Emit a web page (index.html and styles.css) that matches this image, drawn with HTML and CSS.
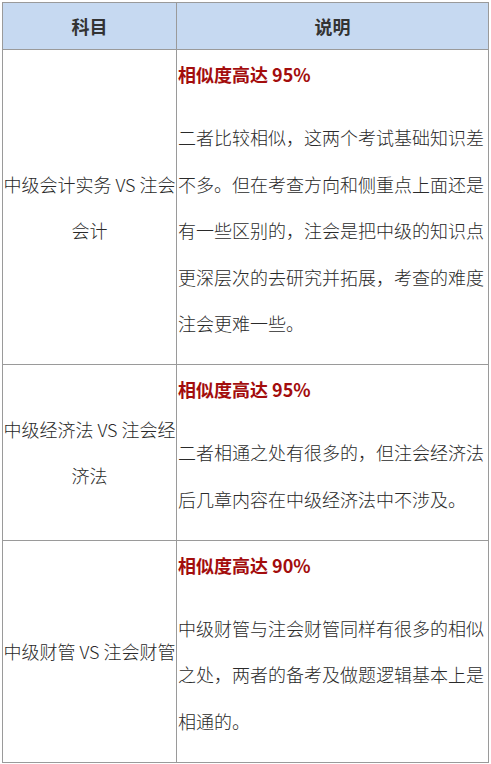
FILE: index.html
```html
<!DOCTYPE html>
<html lang="zh-CN">
<head>
<meta charset="utf-8">
<title>科目说明</title>
<link rel="stylesheet" href="styles.css">
</head>
<body>
<table class="cmp">
  <colgroup>
    <col class="col-subject">
    <col class="col-desc">
  </colgroup>
  <thead>
    <tr>
      <th>科目</th>
      <th>说明</th>
    </tr>
  </thead>
  <tbody>
    <tr>
      <td class="subject">中级会计实务 VS 注会<br>会计</td>
      <td class="desc">
        <p class="rate">相似度高达 95%</p>
        <p>二者比较相似，这两个考试基础知识差不多。但在考查方向和侧重点上面还是有一些区别的，注会是把中级的知识点更深层次的去研究并拓展，考查的难度注会更难一些。</p>
      </td>
    </tr>
    <tr>
      <td class="subject">中级经济法 VS 注会经<br>济法</td>
      <td class="desc">
        <p class="rate">相似度高达 95%</p>
        <p>二者相通之处有很多的，但注会经济法后几章内容在中级经济法中不涉及。</p>
      </td>
    </tr>
    <tr>
      <td class="subject">中级财管 VS 注会财管</td>
      <td class="desc">
        <p class="rate">相似度高达 90%</p>
        <p>中级财管与注会财管同样有很多的相似之处，两者的备考及做题逻辑基本上是相通的。</p>
      </td>
    </tr>
  </tbody>
</table>
</body>
</html>
```
FILE: styles.css
```css
html, body {
  margin: 0;
  padding: 0;
  background: #ffffff;
}

body {
  padding: 2px 0 0 2px;
  font-family: "Noto Sans CJK SC", "Noto Sans", sans-serif;
  font-size: 18px;
  color: #2a2a2a;
}

.cmp {
  width: 487px;
  table-layout: fixed;
  border-collapse: collapse;
  border: 1px solid #9a9a9a;
}

.col-subject {
  width: 174px;
}

.cmp th,
.cmp td {
  border: 1px solid #9a9a9a;
}

.cmp th {
  height: 46px;
  padding: 0;
  background: #c6d9f1;
  color: #333333;
  font-weight: bold;
  font-size: 18px;
  text-align: center;
  vertical-align: middle;
}

.subject {
  padding: 0;
  text-align: center;
  vertical-align: middle;
  line-height: 46.5px;
  font-weight: 300;
  white-space: nowrap;
}

.desc {
  padding: 1px 1px 1px 1px;
  vertical-align: top;
  line-height: 46.5px;
  font-weight: 300;
}

.desc p {
  margin: 0 0 16.5px 0;
}

.desc .rate {
  color: #a30d0d;
  font-weight: bold;
}
```
